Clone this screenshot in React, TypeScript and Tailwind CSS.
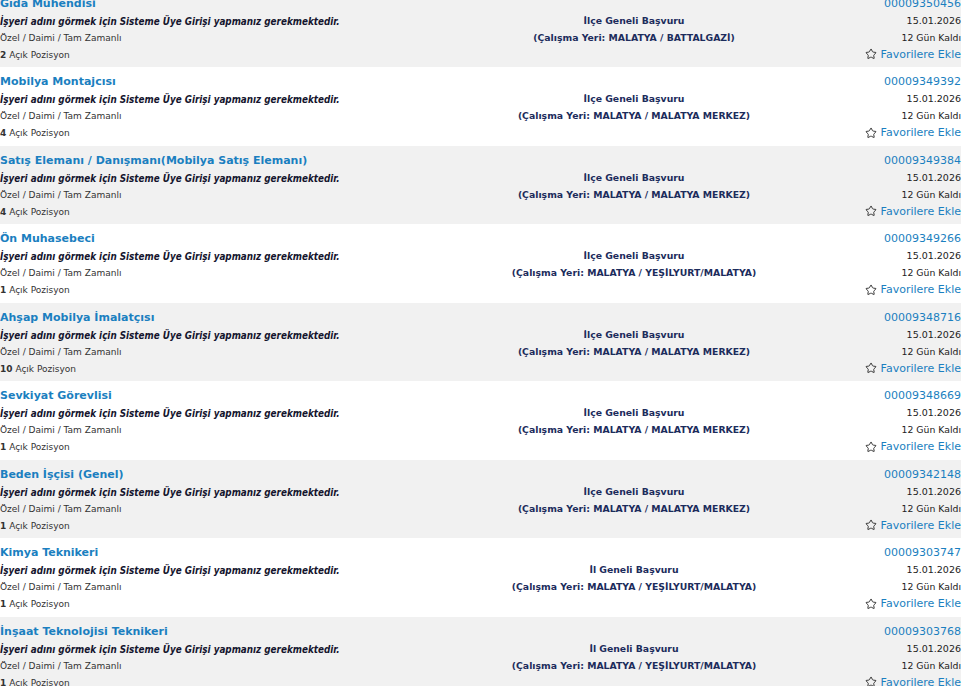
import React from 'react';
import { Star } from 'lucide-react';

interface Job {
  title: string;
  type: string;
  positions: number;
  scope: string;
  place: string;
  no: string;
}

const jobs: Job[] = [
  { title: 'Gıda Mühendisi', type: 'Özel / Daimi / Tam Zamanlı', positions: 2, scope: 'İlçe Geneli Başvuru', place: 'MALATYA / BATTALGAZİ', no: '00009350456' },
  { title: 'Mobilya Montajcısı', type: 'Özel / Daimi / Tam Zamanlı', positions: 4, scope: 'İlçe Geneli Başvuru', place: 'MALATYA / MALATYA MERKEZ', no: '00009349392' },
  { title: 'Satış Elemanı / Danışmanı(Mobilya Satış Elemanı)', type: 'Özel / Daimi / Tam Zamanlı', positions: 4, scope: 'İlçe Geneli Başvuru', place: 'MALATYA / MALATYA MERKEZ', no: '00009349384' },
  { title: 'Ön Muhasebeci', type: 'Özel / Daimi / Tam Zamanlı', positions: 1, scope: 'İlçe Geneli Başvuru', place: 'MALATYA / YEŞİLYURT/MALATYA', no: '00009349266' },
  { title: 'Ahşap Mobilya İmalatçısı', type: 'Özel / Daimi / Tam Zamanlı', positions: 10, scope: 'İlçe Geneli Başvuru', place: 'MALATYA / MALATYA MERKEZ', no: '00009348716' },
  { title: 'Sevkiyat Görevlisi', type: 'Özel / Daimi / Tam Zamanlı', positions: 1, scope: 'İlçe Geneli Başvuru', place: 'MALATYA / MALATYA MERKEZ', no: '00009348669' },
  { title: 'Beden İşçisi (Genel)', type: 'Özel / Daimi / Tam Zamanlı', positions: 1, scope: 'İlçe Geneli Başvuru', place: 'MALATYA / MALATYA MERKEZ', no: '00009342148' },
  { title: 'Kimya Teknikeri', type: 'Özel / Daimi / Tam Zamanlı', positions: 1, scope: 'İl Geneli Başvuru', place: 'MALATYA / YEŞİLYURT/MALATYA', no: '00009303747' },
  { title: 'İnşaat Teknolojisi Teknikeri', type: 'Özel / Daimi / Tam Zamanlı', positions: 1, scope: 'İl Geneli Başvuru', place: 'MALATYA / YEŞİLYURT/MALATYA', no: '00009303768' },
];

function JobRow({ job, odd }: { job: Job; odd: boolean }) {
  return (
    <div className={`flex h-[78.5px] ${odd ? 'bg-white' : 'bg-[#f1f1f1]'}`}>
      <div className="flex-1 min-w-0 pt-[5px]">
        <div className="text-[11px] font-bold leading-[19px] text-[#1b7fc0]">{job.title}</div>
        <div className="font-['DejaVu_Sans_Condensed','DejaVu_Sans',sans-serif] text-[9.8px] font-bold italic leading-[17px] text-[#15152e]">
          İşyeri adını görmek için Sisteme Üye Girişi yapmanız gerekmektedir.
        </div>
        <div className="text-[9px] leading-[17px] text-[#333]">{job.type}</div>
        <div className="text-[9px] leading-[17px] text-[#333]">
          <span className="font-bold">{job.positions}</span> Açık Pozisyon
        </div>
      </div>
      <div className="w-[300px] flex flex-col justify-center items-center pt-[2px] text-[9.3px] font-bold leading-[17px] text-[#1c2c5c]">
        <div>{job.scope}</div>
        <div>(Çalışma Yeri: {job.place})</div>
      </div>
      <div className="w-[177px] flex flex-col items-end pt-[6px]">
        <div className="text-[11px] leading-[17px] text-[#1b7fc0]">{job.no}</div>
        <div className="text-[9.5px] leading-[17px] text-[#222]">15.01.2026</div>
        <div className="text-[9.3px] leading-[17px] text-[#222]">12 Gün Kaldı</div>
        <div className="flex items-center gap-[4px] text-[11px] leading-[17px] text-[#1b7fc0]">
          <Star size={12} strokeWidth={1.8} className="text-[#222]" />
          Favorilere Ekle
        </div>
      </div>
    </div>
  );
}

export default function App() {
  return (
    <div className="h-[686px] w-[968px] overflow-hidden bg-white font-['DejaVu_Sans',sans-serif]">
      <div className="w-[961px] -mt-[11.5px]">
        {jobs.map((job, i) => (
          <JobRow key={job.no} job={job} odd={i % 2 === 1} />
        ))}
      </div>
    </div>
  );
}
